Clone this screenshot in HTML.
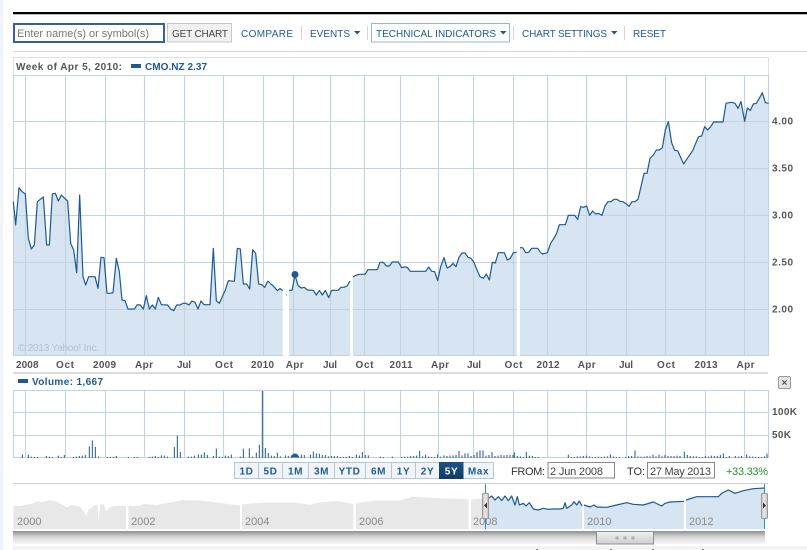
<!DOCTYPE html>
<html><head><meta charset="utf-8"><title>CMO.NZ chart</title>
<style>
html,body{margin:0;padding:0;background:#fff;width:807px;height:550px;overflow:hidden}
svg{display:block;position:absolute;left:0;top:0}
text{font-family:"Liberation Sans",sans-serif;white-space:pre}
.n{font-size:10px;fill:#1d5a93}
.a{font-size:10px;font-weight:bold;fill:#555}
.b{font-size:10px;font-weight:bold;fill:#1d5a93}
.r{font-size:10px;font-weight:bold;fill:#1d5a93;text-anchor:middle;letter-spacing:.6px}
.ny{font-size:11px;fill:#8a8a8a}
.f{font-size:11px;fill:#333}
.fill{fill:#d6e5f1;stroke:none}
.ln{fill:none;stroke:#1d5a93;stroke-width:1.2;vector-effect:non-scaling-stroke;stroke-linejoin:round}
.g{stroke:#c3d3e0;stroke-width:1.1;fill:none}
.vb{stroke:#1d5a93;stroke-width:1;fill:none;vector-effect:non-scaling-stroke}
.gy{fill:#e8e8e8}
.nb{fill:#d6e5f1}
</style></head><body>
<svg width="807" height="550" viewBox="0 0 807 550" xmlns="http://www.w3.org/2000/svg">
<defs>
<linearGradient id="sc" x1="0" y1="0" x2="0" y2="1"><stop offset="0" stop-color="#8f8f8f"/><stop offset=".45" stop-color="#d6d6d6"/><stop offset="1" stop-color="#f8f8f8"/></linearGradient>
<linearGradient id="th" x1="0" y1="0" x2="0" y2="1"><stop offset="0" stop-color="#f0f0f0"/><stop offset="1" stop-color="#cfcfcf"/></linearGradient>
<linearGradient id="hd" x1="0" y1="0" x2="1" y2="0"><stop offset="0" stop-color="#c8c8c8"/><stop offset=".5" stop-color="#e8e8e8"/><stop offset="1" stop-color="#bdbdbd"/></linearGradient>
<linearGradient id="sel" x1="0" y1="0" x2="0" y2="1"><stop offset="0" stop-color="#1d5288"/><stop offset="1" stop-color="#123a62"/></linearGradient>
<clipPath id="vc"><rect x="13" y="390" width="756" height="67.5"/></clipPath>
</defs>

<!-- left strip and top rule -->
<rect x="0" y="0" width="3" height="550" fill="#eff4fa"/>
<rect x="13" y="12" width="794" height="2" fill="#000"/>
<rect x="13" y="14" width="794" height="1" fill="#bbb"/>

<!-- toolbar -->
<rect x="14" y="24" width="150" height="18" fill="#fff" stroke="#3a5f9f" stroke-width="2"/>
<text x="17" y="37" font-size="11" fill="#777" textLength="132" lengthAdjust="spacing">Enter name(s) or symbol(s)</text>
<rect x="167.500" y="23.500" width="64" height="18.500" fill="#f1f1f1" stroke="#c4c9ce"/>
<text x="172" y="37" font-size="10" fill="#444" textLength="56" lengthAdjust="spacing">GET CHART</text>
<text class="n" x="241" y="37" textLength="52" lengthAdjust="spacing">COMPARE</text>
<rect x="301" y="26" width="1" height="14" fill="#d5d5d5"/>
<text class="n" x="310" y="37" textLength="40" lengthAdjust="spacing">EVENTS</text>
<path d="M354 31h6.500l-3.250 3.500z" fill="#1d5a93"/>
<rect x="367" y="26" width="1" height="14" fill="#d5d5d5"/>
<rect x="371.500" y="23.500" width="138" height="18.500" fill="#fff" stroke="#8fb4e6"/>
<text class="n" x="376" y="37" textLength="120" lengthAdjust="spacing">TECHNICAL INDICATORS</text>
<path d="M500 31h6.500l-3.250 3.500z" fill="#1d5a93"/>
<rect x="513" y="26" width="1" height="14" fill="#d5d5d5"/>
<text class="n" x="522" y="37" textLength="85" lengthAdjust="spacing">CHART SETTINGS</text>
<path d="M611 31h6.500l-3.250 3.500z" fill="#1d5a93"/>
<rect x="624" y="26" width="1" height="14" fill="#d5d5d5"/>
<text class="n" x="633" y="37" textLength="33" lengthAdjust="spacing">RESET</text>
<rect x="13" y="51" width="794" height="1" fill="#d8d8d8"/>

<!-- header box -->
<path d="M13.500 75V57.500H768.500V75" fill="none" stroke="#dde2e6"/>
<text class="a" x="16" y="70" textLength="106" lengthAdjust="spacing">Week of Apr 5, 2010:</text>
<rect x="131" y="64" width="10" height="4" fill="#1d5a93"/>
<text class="b" x="145" y="70" textLength="62" lengthAdjust="spacing">CMO.NZ 2.37</text>

<!-- area fill -->
<g transform="translate(0,100) scale(.33333)">
<polygon class="fill" points="40,305 47,375 57,263 66,275 76,282 85,415 94,447 103,435 112,305 121,298 130,291 140,435 148,435 157,282 166,280 175,303 184,285 194,295 203,303 212,430 221,450 230,518 239,285 249,530 257,555 266,530 285,530 294,565 303,472 312,473 321,580 330,580 339,578 349,475 358,515 366,600 375,602 384,627 403,627 412,614 421,615 430,627 439,587 448,627 457,615 466,627 475,592 484,614 503,615 512,627 521,632 530,615 540,615 549,610 558,610 567,615 576,603 585,607 594,627 603,603 612,614 630,614 640,445 649,602 658,610 667,590 676,570 685,542 703,544 712,445 721,447 730,552 740,552 749,567 758,449 767,460 776,552 785,554 794,562 803,544 810,548 813,548 813,765 40,765"/>
</g>
<g transform="translate(270,200) scale(.33333)">
<polygon class="fill" points="0,250 10,258 22,272 30,266 38,272 38,465 0,465"/>
<polygon class="fill" points="57,271 66,271 75,225 84,257 94,264 103,262 112,270 130,271 139,285 148,271 157,285 166,271 176,293 185,271 204,271 213,262 222,262 231,258 240,243 240,465 57,465"/>
<polygon class="fill" points="249,230 258,226 267,223 285,223 294,209 322,209 330,187 340,187 349,198 358,198 367,186 385,186 395,203 403,201 412,202 421,214 467,214 476,201 485,214 494,215 503,242 512,200 522,173 531,204 540,200 549,190 558,200 567,172 576,159 585,159 594,172 603,175 612,187 621,210 630,230 640,235 649,222 658,240 667,187 676,189 685,158 703,158 712,180 721,175 730,158 740,157 740,465 249,465"/>
<polygon class="fill" points="750,143 758,143 767,158 776,157 785,145 803,145 810,155 813,155 813,465 750,465"/>
</g>
<g transform="translate(540,80) scale(.33333)">
<polygon class="fill" points="0,517 8,522 22,518 32,490 40,478 50,460 58,434 76,434 85,406 104,406 113,418 122,380 131,382 140,378 149,406 158,393 167,402 176,400 186,406 195,378 204,365 213,365 222,358 231,358 240,364 249,365 258,371 267,379 276,365 285,365 294,358 303,320 312,280 321,280 330,235 340,225 349,210 358,210 367,203 376,150 385,125 395,188 404,211 413,212 422,232 431,252 440,238 449,225 458,212 467,190 476,170 485,168 494,140 503,150 512,140 521,126 549,126 558,70 567,68 576,67 585,70 594,85 603,65 614,124 622,84 631,91 640,72 649,70 658,55 667,38 676,68 686,70 686,825 0,825"/>
</g>

<!-- main grid -->
<path class="g" d="M13.500 75.500H768.500M13.500 121.500H768.500M13.500 168.500H768.500M13.500 215.500H768.500M13.500 262.500H768.500M13.500 309.500H768.500M13.500 355.500H768.500M13.500 75V356M25.500 75V356M65.500 75V356M105.500 75V356M144.500 75V356M184.500 75V356M223.500 75V356M263.500 75V356M293.500 75V356M330.500 75V356M364.500 75V356M400.500 75V356M438.500 75V356M473.500 75V356M513.500 75V356M547.500 75V356M586.500 75V356M626.500 75V356M665.500 75V356M705.500 75V356M744.500 75V356M768.500 75V356"/>
<rect x="283" y="291" width="6" height="65" fill="#fff"/>
<rect x="350" y="281" width="3" height="75" fill="#fff"/>
<rect x="517" y="252" width="3" height="104" fill="#fff"/>

<!-- price line -->
<g transform="translate(0,100) scale(.33333)">
<polyline class="ln" points="40,305 47,375 57,263 66,275 76,282 85,415 94,447 103,435 112,305 121,298 130,291 140,435 148,435 157,282 166,280 175,303 184,285 194,295 203,303 212,430 221,450 230,518 239,285 249,530 257,555 266,530 285,530 294,565 303,472 312,473 321,580 330,580 339,578 349,475 358,515 366,600 375,602 384,627 403,627 412,614 421,615 430,627 439,587 448,627 457,615 466,627 475,592 484,614 503,615 512,627 521,632 530,615 540,615 549,610 558,610 567,615 576,603 585,607 594,627 603,603 612,614 630,614 640,445 649,602 658,610 667,590 676,570 685,542 703,544 712,445 721,447 730,552 740,552 749,567 758,449 767,460 776,552 785,554 794,562 803,544 810,548"/>
</g>
<g transform="translate(270,200) scale(.33333)">
<polyline class="ln" points="0,250 10,258 22,272 30,266 38,272"/>
<polyline class="ln" points="57,271 66,271 75,225 84,257 94,264 103,262 112,270 130,271 139,285 148,271 157,285 166,271 176,293 185,271 204,271 213,262 222,262 231,258 240,243"/>
<polyline class="ln" points="249,230 258,226 267,223 285,223 294,209 322,209 330,187 340,187 349,198 358,198 367,186 385,186 395,203 403,201 412,202 421,214 467,214 476,201 485,214 494,215 503,242 512,200 522,173 531,204 540,200 549,190 558,200 567,172 576,159 585,159 594,172 603,175 612,187 621,210 630,230 640,235 649,222 658,240 667,187 676,189 685,158 703,158 712,180 721,175 730,158 740,157"/>
<polyline class="ln" points="750,143 758,143 767,158 776,157 785,145 803,145 810,155"/>
</g>
<g transform="translate(540,80) scale(.33333)">
<polyline class="ln" points="0,517 8,522 22,518 32,490 40,478 50,460 58,434 76,434 85,406 104,406 113,418 122,380 131,382 140,378 149,406 158,393 167,402 176,400 186,406 195,378 204,365 213,365 222,358 231,358 240,364 249,365 258,371 267,379 276,365 285,365 294,358 303,320 312,280 321,280 330,235 340,225 349,210 358,210 367,203 376,150 385,125 395,188 404,211 413,212 422,232 431,252 440,238 449,225 458,212 467,190 476,170 485,168 494,140 503,150 512,140 521,126 549,126 558,70 567,68 576,67 585,70 594,85 603,65 614,124 622,84 631,91 640,72 649,70 658,55 667,38 676,68 686,70"/>
</g>
<circle cx="295" cy="274.500" r="3.500" fill="#1d5a93"/>
<rect x="286" y="294.500" width="1" height="1" fill="#5f8db5"/>
<text x="18" y="351" font-size="10" fill="#b4c2cd" textLength="81" lengthAdjust="spacing">© 2013 Yahoo! Inc.</text>

<!-- x axis labels -->
<text class="a" x="16" y="368" textLength="22.500" lengthAdjust="spacing">2008</text>
<text class="a" x="56" y="368" textLength="18" lengthAdjust="spacing">Oct</text>
<text class="a" x="93" y="368" textLength="23" lengthAdjust="spacing">2009</text>
<text class="a" x="135" y="368" textLength="18" lengthAdjust="spacing">Apr</text>
<text class="a" x="177" y="368" textLength="14" lengthAdjust="spacing">Jul</text>
<text class="a" x="215" y="368" textLength="18" lengthAdjust="spacing">Oct</text>
<text class="a" x="251" y="368" textLength="23" lengthAdjust="spacing">2010</text>
<text class="a" x="285.700" y="368" textLength="18" lengthAdjust="spacing">Apr</text>
<text class="a" x="323" y="368" textLength="14" lengthAdjust="spacing">Jul</text>
<text class="a" x="355.500" y="368" textLength="18" lengthAdjust="spacing">Oct</text>
<text class="a" x="389.500" y="368" textLength="23" lengthAdjust="spacing">2011</text>
<text class="a" x="431" y="368" textLength="18" lengthAdjust="spacing">Apr</text>
<text class="a" x="467" y="368" textLength="14" lengthAdjust="spacing">Jul</text>
<text class="a" x="504.500" y="368" textLength="18" lengthAdjust="spacing">Oct</text>
<text class="a" x="536.500" y="368" textLength="23" lengthAdjust="spacing">2012</text>
<text class="a" x="577.700" y="368" textLength="18" lengthAdjust="spacing">Apr</text>
<text class="a" x="619" y="368" textLength="14" lengthAdjust="spacing">Jul</text>
<text class="a" x="657" y="368" textLength="18" lengthAdjust="spacing">Oct</text>
<text class="a" x="694.500" y="368" textLength="23" lengthAdjust="spacing">2013</text>
<text class="a" x="736.500" y="368" textLength="18" lengthAdjust="spacing">Apr</text>

<!-- y axis labels -->
<text class="a" x="772" y="124.500" textLength="21" lengthAdjust="spacing">4.00</text>
<text class="a" x="772" y="171.500" textLength="21" lengthAdjust="spacing">3.50</text>
<text class="a" x="772" y="218.500" textLength="21" lengthAdjust="spacing">3.00</text>
<text class="a" x="772" y="265.500" textLength="21" lengthAdjust="spacing">2.50</text>
<text class="a" x="772" y="312.500" textLength="21" lengthAdjust="spacing">2.00</text>

<!-- volume header -->
<rect x="13" y="372" width="755" height="2" fill="#dcdcdc"/>
<rect x="18" y="379" width="10" height="4" fill="#1d5a93"/>
<text class="b" x="32" y="385" textLength="71" lengthAdjust="spacing">Volume: 1,667</text>
<rect x="778.500" y="376.500" width="12" height="12" rx="1.500" fill="#e4e4e4" stroke="#9a9a9a"/>
<path d="M782.300 380.300l4.400 4.400M786.700 380.300l-4.400 4.400" stroke="#444" stroke-width="1" fill="none"/>

<!-- volume grid -->
<path class="g" d="M13.500 390.500H768.500M13.500 412.500H768.500M13.500 435.500H768.500M13.500 457.500H768.500M13.500 390V458M25.500 390V458M65.500 390V458M105.500 390V458M144.500 390V458M184.500 390V458M223.500 390V458M263.500 390V458M293.500 390V458M330.500 390V458M364.500 390V458M400.500 390V458M438.500 390V458M473.500 390V458M513.500 390V458M547.500 390V458M586.500 390V458M626.500 390V458M665.500 390V458M705.500 390V458M744.500 390V458M768.500 390V458"/>

<!-- volume bars -->
<g transform="translate(0,370) scale(.33333)">
<path class="vb" d="M67 264V253M85 264V254M94 264V260M103 264V261M112 264V261M139 264V258M148 264V260M157 264V261M175 264V257M184 264V261M193 264V255M220 264V261M229 264V260M238 264V258M247 264V257M256 264V255M268 264V229M277 264V211M286 264V231M295 264V260M322 264V261M331 264V261M340 264V261M349 264V258M385 264V261M403 264V261M412 264V261M448 264V261M457 264V260M466 264V258M475 264V261M484 264V256M493 264V257M502 264V260M523 264V231M532 264V197M541 264V246M565 264V260M574 264V260M583 264V257M595 264V253M604 264V254M613 264V247M622 264V255M640 264V258M649 264V236M658 264V260M667 264V261M676 264V257M685 264V258M694 264V254M721 264V260M730 264V236M748 264V235M757 264V260M769 264V248M778 264V224M787 264V63M796 264V234M805 264V249M814 264V257M823 264V258M832 264V248M841 264V259M856 264V256M865 264V258M874 264V256M895 264V257M904 264V254M913 264V255M931 264V254M940 264V244M949 264V250M958 264V251M967 264V255M976 264V255M985 264V259M994 264V258M1003 264V258M1012 264V258M1021 264V261M1030 264V261M1039 264V261M1048 264V258M1057 264V261M1069 264V253M1078 264V256M1087 264V246M1096 264V255M1105 264V256M1141 264V260M1150 264V261M1177 264V260"/>
</g>
<g transform="translate(400,370) scale(.33333)">
<path class="vb" d="M5 264V261M14 264V260M23 264V260M32 264V258M41 264V258M50 264V257M59 264V243M68 264V259M77 264V254M86 264V259M95 264V261M104 264V261M113 264V253M122 264V260M132 264V256M141 264V258M150 264V257M159 264V256M168 264V255M177 264V243M186 264V256M195 264V250M204 264V250M213 264V258M222 264V255M231 264V246M240 264V241M249 264V241M258 264V257M267 264V255M276 264V246M285 264V258M294 264V257M303 264V255M312 264V256M321 264V255M330 264V255M339 264V255M343 264V247M352 264V258M361 264V259M370 264V261M379 264V246M388 264V257M397 264V258M406 264V261M415 264V261M505 264V254M514 264V261M523 264V261M532 264V259M541 264V259M550 264V258M559 264V257M568 264V259M577 264V261M586 264V261M595 264V260M604 264V261M613 264V260M622 264V259M631 264V253M640 264V260M649 264V261M658 264V261M677 264V261M686 264V258M695 264V258M705 264V241M714 264V259M723 264V260M732 264V260M741 264V258M750 264V259M759 264V254M768 264V259M777 264V254M786 264V259M795 264V255M804 264V258M813 264V258M822 264V258M831 264V257M840 264V258M853 264V245M862 264V255M871 264V258M880 264V259M889 264V259M898 264V261M907 264V261M916 264V258M925 264V260M934 264V257M943 264V258M952 264V258M961 264V255M970 264V250M979 264V261M988 264V258M1006 264V258M1016 264V260M1025 264V258M1040 264V253M1049 264V259M1058 264V260M1067 264V261M1076 264V261M1085 264V261M1094 264V259M1101 264V251"/>
</g>
<circle cx="295" cy="457" r="3.500" fill="#1d5a93" clip-path="url(#vc)"/>
<text class="a" x="772" y="415" textLength="25" lengthAdjust="spacing">100K</text>
<text class="a" x="772" y="438" textLength="19" lengthAdjust="spacing">50K</text>

<!-- range buttons -->
<rect x="234.500" y="462.500" width="259" height="16" fill="#f1f5f9" stroke="#b7c7d4"/>
<path d="M258.500 462V479M282.500 462V479M308.500 462V479M334.500 462V479M365.500 462V479M391.500 462V479M415.500 462V479" stroke="#b7c7d4" fill="none"/>
<rect x="439" y="462" width="24.500" height="17" fill="url(#sel)"/>
<text class="r" x="246.500" y="474.500">1D</text>
<text class="r" x="270.500" y="474.500">5D</text>
<text class="r" x="295.500" y="474.500">1M</text>
<text class="r" x="321.500" y="474.500">3M</text>
<text class="r" x="349.500" y="474.500">YTD</text>
<text class="r" x="378.500" y="474.500">6M</text>
<text class="r" x="403.500" y="474.500">1Y</text>
<text class="r" x="427.500" y="474.500">2Y</text>
<text class="r" x="451.500" y="474.500" style="fill:#fff">5Y</text>
<text class="r" x="478.500" y="474.500">Max</text>

<!-- from / to -->
<text class="f" x="511" y="475" textLength="34" lengthAdjust="spacing">FROM:</text>
<rect x="548" y="462.500" width="66.500" height="15.500" fill="#fff" stroke="#8a8a8a"/>
<text class="f" x="550" y="475" style="fill:#444" textLength="53" lengthAdjust="spacing">2 Jun 2008</text>
<text class="f" x="627" y="475" textLength="18" lengthAdjust="spacing">TO:</text>
<rect x="647.500" y="462.500" width="67" height="15.500" fill="#fff" stroke="#8a8a8a"/>
<text class="f" x="650" y="475" style="fill:#444" textLength="61" lengthAdjust="spacing">27 May 2013</text>
<text x="726" y="475" font-size="11" fill="#2a962a" textLength="42" lengthAdjust="spacing">+33.33%</text>

<rect x="13" y="483" width="755" height="1" fill="#cfcfcf"/>

<!-- navigator -->
<g transform="translate(0,370) scale(.33333)">
<polygon class="gy" points="40,408 60,408 100,400 110,393 125,397 150,390 165,393 185,403 200,412 215,405 240,410 260,438 265,420 285,405 292,405 296,460 300,403 312,403 318,425 330,412 345,408 378,408 378,477 40,477"/>
<polygon class="gy" points="385,408 420,408 430,402 470,405 510,398 550,390 600,392 650,397 720,407 720,477 385,477"/>
<polygon class="gy" points="726,403 760,400 800,398 880,398 930,404 960,397 1010,393 1060,402 1060,477 726,477"/>
<polygon class="gy" points="1068,400 1120,392 1200,392 1240,380 1300,384 1406,388 1406,477 1068,477"/>
</g>
<g transform="translate(400,370) scale(.33333)">
<polygon class="gy" points="213,388 265,385 265,477 213,477"/>
<polygon class="nb" points="265,385 275,378 285,390 295,380 305,392 315,378 325,392 335,378 345,405 352,380 358,405 370,400 378,408 388,398 400,417 415,420 430,415 445,418 460,417 480,417 490,415 495,398 500,415 515,405 522,395 530,405 538,393 546,408 546,477 265,477"/>
<polygon class="nb" points="552,405 570,411 582,405 590,411 620,412 650,405 680,398 700,403 730,405 760,396 785,408 795,400 810,396 852,394 852,477 552,477"/>
<polygon class="nb" points="858,390 890,380 955,380 965,370 985,360 1005,370 1030,362 1060,356 1094,354 1094,477 858,477"/>
<polyline class="ln" points="265,385 275,378 285,390 295,380 305,392 315,378 325,392 335,378 345,405 352,380 358,405 370,400 378,408 388,398 400,417 415,420 430,415 445,418 460,417 480,417 490,415 495,398 500,415 515,405 522,395 530,405 538,393 546,408"/>
<polyline class="ln" points="552,405 570,411 582,405 590,411 620,412 650,405 680,398 700,403 730,405 760,396 785,408 795,400 810,396 852,394"/>
<polyline class="ln" points="858,390 890,380 955,380 965,370 985,360 1005,370 1030,362 1060,356 1094,354"/>
</g>
<text class="ny" x="17" y="525" textLength="24.500" lengthAdjust="spacing">2000</text>
<text class="ny" x="131" y="525" textLength="24.500" lengthAdjust="spacing">2002</text>
<text class="ny" x="245" y="525" textLength="24.500" lengthAdjust="spacing">2004</text>
<text class="ny" x="359" y="525" textLength="24.500" lengthAdjust="spacing">2006</text>
<text class="ny" x="473" y="525" textLength="24.500" lengthAdjust="spacing">2008</text>
<text class="ny" x="587" y="525" textLength="24.500" lengthAdjust="spacing">2010</text>
<text class="ny" x="689" y="525" textLength="24.500" lengthAdjust="spacing">2012</text>
<rect x="485" y="484" width="1" height="45" fill="#1e90e8"/>
<rect x="764" y="484" width="1" height="45" fill="#1e90e8"/>
<rect x="482.500" y="493.500" width="6" height="25" rx="1" fill="url(#hd)" stroke="#9a9a9a"/>
<path d="M487 502.500v6l-3-3z" fill="#333"/>
<rect x="761.500" y="493.500" width="6" height="25" rx="1" fill="url(#hd)" stroke="#9a9a9a"/>
<path d="M763 502.500v6l3-3z" fill="#333"/>

<!-- scrollbar -->
<rect x="13" y="531" width="752" height="13" fill="url(#sc)"/>
<rect x="596.500" y="531.500" width="57" height="12.500" fill="url(#th)" stroke="#8e8e8e"/>
<circle cx="617" cy="538" r="1.700" fill="#b0b0b0"/>
<circle cx="625" cy="538" r="1.700" fill="#b0b0b0"/>
<circle cx="633" cy="538" r="1.700" fill="#b0b0b0"/>

<!-- bottom strip -->
<rect x="13" y="546" width="794" height="4" fill="#f3f3f3"/>
<path d="M537 549V550M611 549V550M653 549V550M703 549V550" stroke="#000" stroke-width="1" fill="none"/>
</svg>
</body></html>
